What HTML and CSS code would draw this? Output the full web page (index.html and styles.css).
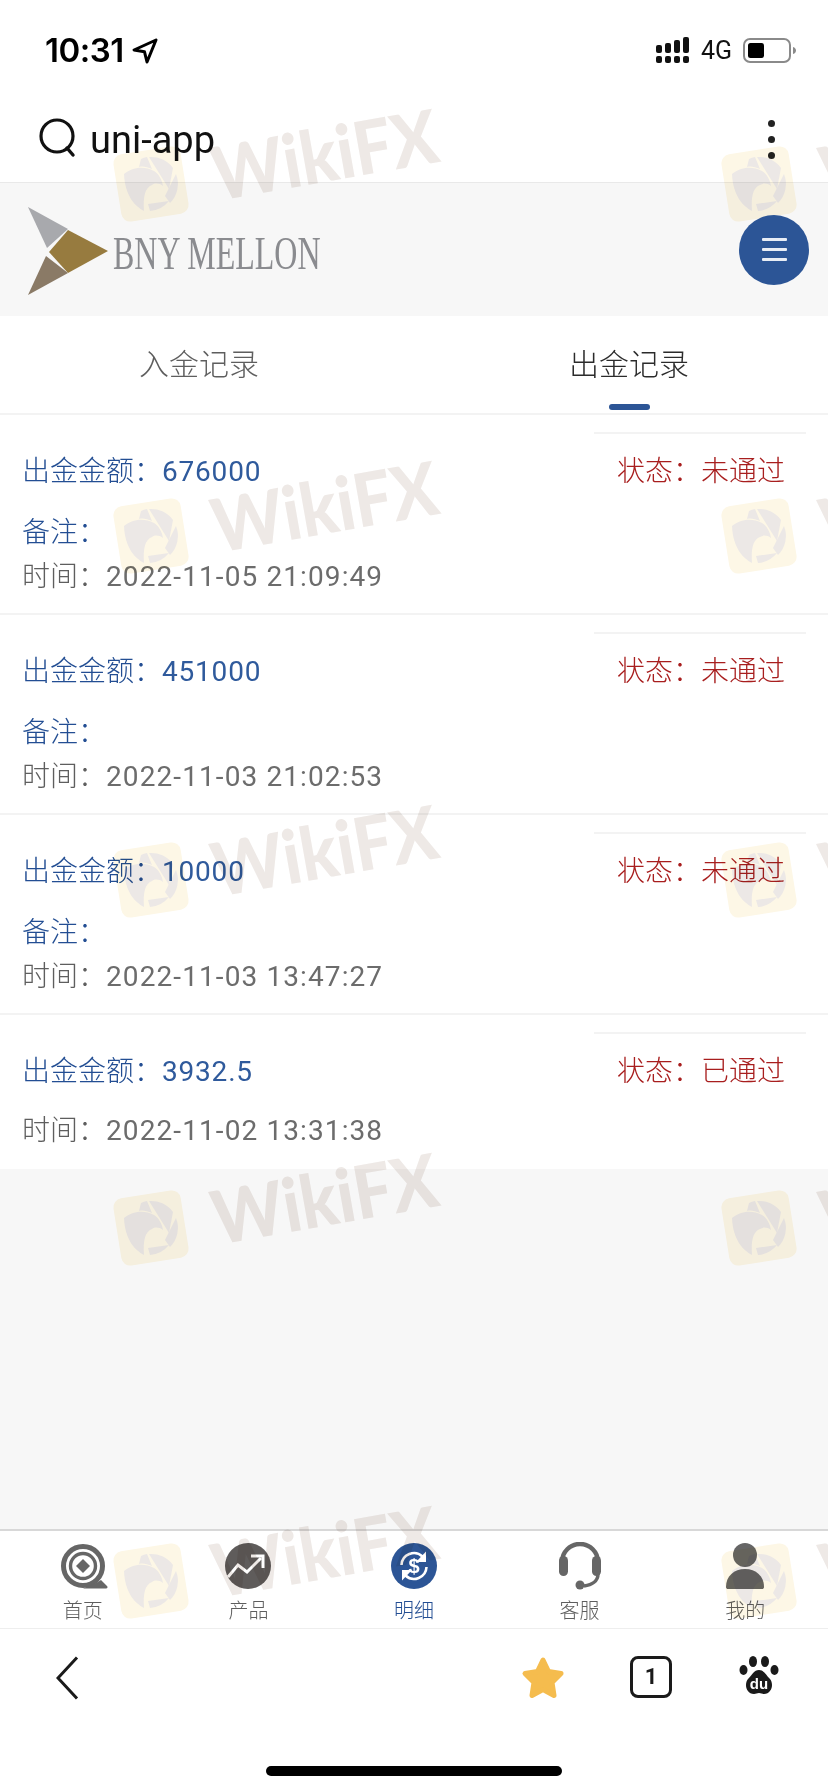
FILE: index.html
```html
<!DOCTYPE html>
<html lang="zh">
<head>
    <meta charset="UTF-8">
    <title>uni-app</title>
    <link rel="stylesheet" href="styles.css">
</head>
<body>
<div class="page">
    <div class="status-bar">
        <div class="status-left">
            <span class="clock">10:31</span>
            <svg class="loc" width="26" height="26" viewBox="0 0 26 26"><path d="M24 2 2 12l10.500 1.800L15 24z" fill="none" stroke="#000" stroke-width="3" stroke-linejoin="round"/></svg>
        </div>
        <div class="status-right">
            <svg width="34" height="27" viewBox="0 0 34 27" fill="#111">
                <rect x="0" y="8" width="6" height="8" rx="2"/><rect x="9" y="6" width="6" height="10" rx="2"/><rect x="18" y="3" width="6" height="13" rx="2"/><rect x="27" y="0" width="6" height="16" rx="2"/>
                <rect x="0" y="19" width="6" height="7" rx="2"/><rect x="9" y="19" width="6" height="7" rx="2"/><rect x="18" y="19" width="6" height="7" rx="2"/><rect x="27" y="19" width="6" height="7" rx="2"/>
            </svg>
            <span class="net">4G</span>
            <svg width="54" height="26" viewBox="0 0 54 26"><rect x="1" y="1" width="46" height="23" rx="6" fill="none" stroke="#8a8a8a" stroke-width="2"/><rect x="5" y="5" width="16" height="15" rx="2.500" fill="#000"/><path d="M50 9c2 .5 3 2 3 3.500s-1 3-3 3.500z" fill="#8a8a8a"/></svg>
        </div>
    </div>

    <div class="nav-bar">
        <svg class="search" width="38" height="40" viewBox="0 0 38 40"><circle cx="18" cy="18" r="16" fill="none" stroke="#111" stroke-width="3.200"/><path d="M28 30l6 7" stroke="#111" stroke-width="3.400" stroke-linecap="round"/></svg>
        <span class="nav-title">uni-app</span>
        <div class="kebab"><i></i><i></i><i></i></div>
    </div>

    <div class="brand">
        <div class="logo">
            <svg width="108" height="90" viewBox="0 0 108 90">
                <polygon points="28,2 68,24 47,43" fill="#a8a9ad"/>
                <polygon points="68,25 108,46 68,68 49,47" fill="#977b3f"/>
                <polygon points="46,51 68,68 28,90" fill="#8a7a66"/>
            </svg>
            <span class="logo-text">BNY MELLON</span>
        </div>
        <div class="menu-btn"><i></i><i></i><i></i></div>
    </div>

    <div class="tabs">
        <span class="tab">入金记录</span>
        <span class="tab tab-on">出金记录</span>
    </div>

    <div class="list">
        <div class="row">
            <div class="row-top">
                <span class="amount">出金金额：<span class="num">676000</span></span>
                <span class="state">状态：未通过</span>
            </div>
            <div class="remark">备注：</div>
            <div class="time">时间：<span class="num">2022-11-05 21:09:49</span></div>
        </div>
        <div class="row">
            <div class="row-top">
                <span class="amount">出金金额：<span class="num">451000</span></span>
                <span class="state">状态：未通过</span>
            </div>
            <div class="remark">备注：</div>
            <div class="time">时间：<span class="num">2022-11-03 21:02:53</span></div>
        </div>
        <div class="row">
            <div class="row-top">
                <span class="amount">出金金额：<span class="num">10000</span></span>
                <span class="state">状态：未通过</span>
            </div>
            <div class="remark">备注：</div>
            <div class="time">时间：<span class="num">2022-11-03 13:47:27</span></div>
        </div>
        <div class="row row-last">
            <div class="row-top">
                <span class="amount">出金金额：<span class="num">3932.5</span></span>
                <span class="state">状态：已通过</span>
            </div>
            <div class="time time-only">时间：<span class="num">2022-11-02 13:31:38</span></div>
        </div>
    </div>

    <div class="filler"></div>

    <div class="tabbar">
        <div class="tb-item">
            <svg width="52" height="48" viewBox="0 0 52 48"><circle cx="26" cy="24" r="19.500" fill="none" stroke="#666" stroke-width="5"/><circle cx="26" cy="24" r="12.500" fill="none" stroke="#666" stroke-width="3.400"/><polygon points="26,17 33,24 26,31 19,24" fill="#666"/><path d="M26 46.500h23c1.500 0 2-1.500 1-2.500l-6-6-5 3z" fill="#666"/></svg>
            <span>首页</span>
        </div>
        <div class="tb-item">
            <svg width="52" height="48" viewBox="0 0 52 48"><circle cx="26" cy="24" r="23" fill="#5f5c5b"/><path d="M6 35l10-12 9 7 14-14" fill="none" stroke="#fff" stroke-width="3"/><path d="M29 14h12v12" fill="none" stroke="#fff" stroke-width="3"/></svg>
            <span>产品</span>
        </div>
        <div class="tb-item tb-on">
            <svg width="52" height="48" viewBox="0 0 52 48"><circle cx="26" cy="24" r="23" fill="#2c5596"/><path d="M13.500 23a12.500 12.500 0 0 1 21-8.500" fill="none" stroke="#fff" stroke-width="2.600"/><path d="M38 9.500v10.500h-10z" fill="#fff"/><path d="M38.500 25a12.500 12.500 0 0 1-21 8.500" fill="none" stroke="#fff" stroke-width="2.600"/><path d="M14 38.500V28h10z" fill="#fff"/><text x="26" y="31" class="dollar">$</text></svg>
            <span>明细</span>
        </div>
        <div class="tb-item">
            <svg width="52" height="48" viewBox="0 0 52 48"><path d="M8 24v-4a18 18 0 0 1 36 0v4" fill="none" stroke="#666" stroke-width="4.500"/><rect x="5" y="14" width="9" height="20" rx="4.500" fill="#666"/><rect x="38" y="14" width="9" height="20" rx="4.500" fill="#666"/><path d="M44 32c0 7-6 11-14 12" fill="none" stroke="#666" stroke-width="3.500"/><circle cx="26" cy="43" r="4.500" fill="#666"/></svg>
            <span>客服</span>
        </div>
        <div class="tb-item">
            <svg width="52" height="48" viewBox="0 0 52 48"><circle cx="26" cy="13" r="12" fill="#666"/><path d="M7 45c0-11 8-18 19-18s19 7 19 18c0 1.500-1 2-2 2H9c-1 0-2-.5-2-2z" fill="#666"/></svg>
            <span>我的</span>
        </div>
    </div>

    <div class="browser-bar">
        <svg width="24" height="44" viewBox="0 0 24 44"><path d="M21 1.500 2 22l19 20.500" fill="none" stroke="#1a1a1a" stroke-width="3"/></svg>
        <svg class="bb-star" width="44" height="44" viewBox="0 0 44 44"><path d="M22 4l5.500 11.500 12.500 2-9 9 2 13L22 33.500 11 39.500l2-13-9-9 12.500-2z" fill="#f5bc4e" stroke="#f5bc4e" stroke-width="5" stroke-linejoin="round"/></svg>
        <div class="bb-count">1</div>
        <svg class="bb-paw" width="40" height="40" viewBox="0 0 40 40" fill="#1a1a1a"><ellipse cx="4.500" cy="14" rx="4" ry="5"/><ellipse cx="14" cy="5.500" rx="4" ry="5.500"/><ellipse cx="26" cy="5.500" rx="4" ry="5.500"/><ellipse cx="35.500" cy="14" rx="4" ry="5"/><path d="M20 14c5 0 7 5 11 9 4 5 2 15-6 15-2 0-3-1-5-1s-3 1-5 1c-8 0-10-10-6-15 4-4 6-9 11-9z"/><text x="20" y="33" class="du">du</text></svg>
    </div>
    <div class="home-wrap"><div class="home-bar"></div></div>

    <!-- watermark lies over the whole page -->
    <svg class="mark-layer" width="828" height="1792" viewBox="0 0 828 1792">
        <defs>
            <g id="mark">
                <rect x="5" y="6" width="68" height="68" rx="9" fill="#fdf7e6" transform="rotate(-9 39 40)"/>
                <g transform="translate(39 40)" fill="#ece8e6">
                    <path d="M-27-10C-20-16-8-19 3-13 8-10 11-4 12 2 8-1 4-1 1 1-6 4-8 12-7 27-16 22-26 12-27-10z"/>
                    <path d="M-2-27A27 27 0 0 1 22-16L18 5z"/>
                    <path d="M25-10A27 27 0 0 1 19 19L14 12z"/>
                    <path d="M-3 20 18 17A27 27 0 0 1-1 27z"/>
                    <path d="M-10-25A27 27 0 0 1-4-27L1-15C-4-17-8-18-12-17z"/>
                </g>
                <text x="105" y="57" class="mark-text" transform="rotate(-10 105 57)" textLength="228" lengthAdjust="spacingAndGlyphs">WikiFX</text>
            </g>
        </defs>
        <use href="#mark" x="112" y="144"/><use href="#mark" x="720" y="144"/>
        <use href="#mark" x="112" y="496"/><use href="#mark" x="720" y="496"/>
        <use href="#mark" x="112" y="840"/><use href="#mark" x="720" y="840"/>
        <use href="#mark" x="112" y="1188"/><use href="#mark" x="720" y="1188"/>
        <use href="#mark" x="112" y="1541"/><use href="#mark" x="720" y="1541"/>
    </svg>
</div>
</body>
</html>
```
FILE: styles.css
```css
*{
    margin: 0px;
    padding: 0px;
    box-sizing: border-box;
}
body{
    background: #fff;
    font-family: Roboto, "Noto Sans CJK SC", sans-serif;
    font-weight: 300;
}
.page{
    position: relative;
    width: 828px;
    height: 1792px;
    overflow: hidden;
    display: flex;
    flex-direction: column;
}
.status-bar{
    height: 90px;
    flex: none;
    display: flex;
    justify-content: space-between;
    align-items: flex-start;
    padding: 28px 31px 0px 45px;
}
.status-left{
    display: flex;
    align-items: center;
    gap: 8px;
}
.clock{
    font-family: Inter, sans-serif;
    font-size: 33px;
    line-height: 44px;
    font-weight: 600;
    letter-spacing: -0.5px;
    color: #000;
}
.loc{
    margin-top: 1px;
}
.status-right{
    display: flex;
    align-items: center;
    gap: 11px;
    margin-top: 9px;
}
.net{
    font-family: Roboto, sans-serif;
    font-size: 25px;
    line-height: 26px;
    font-weight: 400;
    color: #111;
}
.nav-bar{
    height: 93px;
    flex: none;
    display: flex;
    align-items: center;
    padding: 0px 53px 0px 39px;
    border-bottom: 1px solid #e9e9e9;
}
.search{
    margin-top: 3px;
}
.nav-title{
    flex: 1;
    margin: 8px 0px 0px 13px;
    font-family: Roboto, sans-serif;
    font-size: 38px;
    font-weight: 400;
    color: #111;
}
.kebab{
    display: flex;
    flex-direction: column;
    gap: 9px;
    margin-top: 6px;
}
.kebab i{
    display: block;
    width: 7px;
    height: 7px;
    border-radius: 50%;
    background: #222;
}
.brand{
    height: 133px;
    flex: none;
    display: flex;
    justify-content: space-between;
    align-items: center;
    padding-right: 19px;
    background: #f7f7f7;
}
.logo{
    display: flex;
    align-items: center;
}
.logo svg{
    flex: none;
}
.logo-text{
    margin: 9px 0px 0px 5px;
    font-family: "Liberation Serif", serif;
    font-size: 46px;
    line-height: 52px;
    font-weight: 400;
    white-space: nowrap;
    color: #8a8b8f;
    transform: scaleX(0.695);
    transform-origin: left center;
}
.menu-btn{
    position: relative;
    z-index: 2;
    width: 70px;
    height: 70px;
    border-radius: 50%;
    background: #2c5596;
    display: flex;
    flex-direction: column;
    align-items: center;
    justify-content: center;
    gap: 7px;
}
.menu-btn i{
    display: block;
    width: 25px;
    height: 3px;
    border-radius: 1px;
    background: #e8edf5;
}
.tabs{
    height: 99px;
    flex: none;
    display: flex;
    justify-content: space-between;
    padding: 0px 139px 0px 139px;
    border-bottom: 2px solid #f3f3f3;
}
.tab{
    position: relative;
    font-size: 30px;
    line-height: 98px;
    color: #5e5e5e;
}
.tab-on{
    color: #2b2b2b;
}
.tab-on:after{
    content: "";
    position: absolute;
    left: 40px;
    bottom: 3px;
    width: 41px;
    height: 6px;
    border-radius: 3px;
    background: #2c5596;
}
.list{
    flex: none;
    background: #fff;
}
.row{
    height: 200px;
    padding: 17px 22px 0px 22px;
    border-bottom: 2px solid #f3f3f3;
}
.row-last{
    height: 154px;
    border-bottom: none;
}
.row-top{
    height: 76px;
    display: flex;
    justify-content: space-between;
}
.num{
    font-weight: 400;
}
.amount{
    font-size: 28px;
    line-height: 80px;
    color: #234e93;
}
.amount .num{
    letter-spacing: 0.8px;
    color: #2f5a9c;
}
.state{
    width: 212px;
    padding-left: 23px;
    border-top: 2px solid #f3f3f3;
    font-size: 28px;
    line-height: 76px;
    color: #a81e1e;
}
.remark{
    height: 48px;
    font-size: 28px;
    line-height: 50px;
    color: #234e93;
}
.time{
    height: 40px;
    font-size: 28px;
    line-height: 42px;
    color: #5e5e5e;
}
.time .num{
    letter-spacing: 1.1px;
    color: #6c6c6c;
}
.time-only{
    margin-top: 2px;
}
.filler{
    flex: 1;
    background: #f7f7f7;
}
.tabbar{
    height: 100px;
    flex: none;
    display: flex;
    padding-top: 11px;
    border-top: 2px solid #d8d8d8;
    border-bottom: 1px solid #eeeeee;
}
.tb-item{
    flex: 1;
    display: flex;
    flex-direction: column;
    align-items: center;
    font-size: 20px;
    line-height: 26px;
    color: #5e5e5e;
}
.tb-item span{
    margin-top: 8px;
}
.tb-on{
    color: #234e93;
}
.dollar{
    font-family: "Liberation Sans", sans-serif;
    font-size: 20px;
    font-weight: 700;
    fill: #fff;
    text-anchor: middle;
}
.browser-bar{
    height: 137px;
    flex: none;
    display: flex;
    align-items: flex-start;
    padding: 27px 49px 0px 56px;
}
.bb-star{
    margin-left: auto;
}
.bb-count{
    width: 42px;
    height: 42px;
    margin-left: 65px;
    border: 3px solid #1a1a1a;
    border-radius: 8px;
    font-family: Roboto, sans-serif;
    font-size: 22px;
    font-weight: 700;
    line-height: 36px;
    text-align: center;
    color: #1a1a1a;
}
.bb-paw{
    margin-left: 67px;
}
.du{
    font-family: "Liberation Sans", sans-serif;
    font-size: 15px;
    font-weight: 700;
    fill: #fff;
    text-anchor: middle;
}
.home-wrap{
    height: 26px;
    flex: none;
    display: flex;
    justify-content: center;
}
.home-bar{
    width: 296px;
    height: 10px;
    border-radius: 5px;
    background: #000;
}
.mark-layer{
    position: absolute;
    left: 0px;
    top: 0px;
    pointer-events: none;
    mix-blend-mode: multiply;
}
.mark-text{
    font-family: Lato, sans-serif;
    font-size: 74px;
    font-weight: 900;
    fill: #eee9e6;
}
```
